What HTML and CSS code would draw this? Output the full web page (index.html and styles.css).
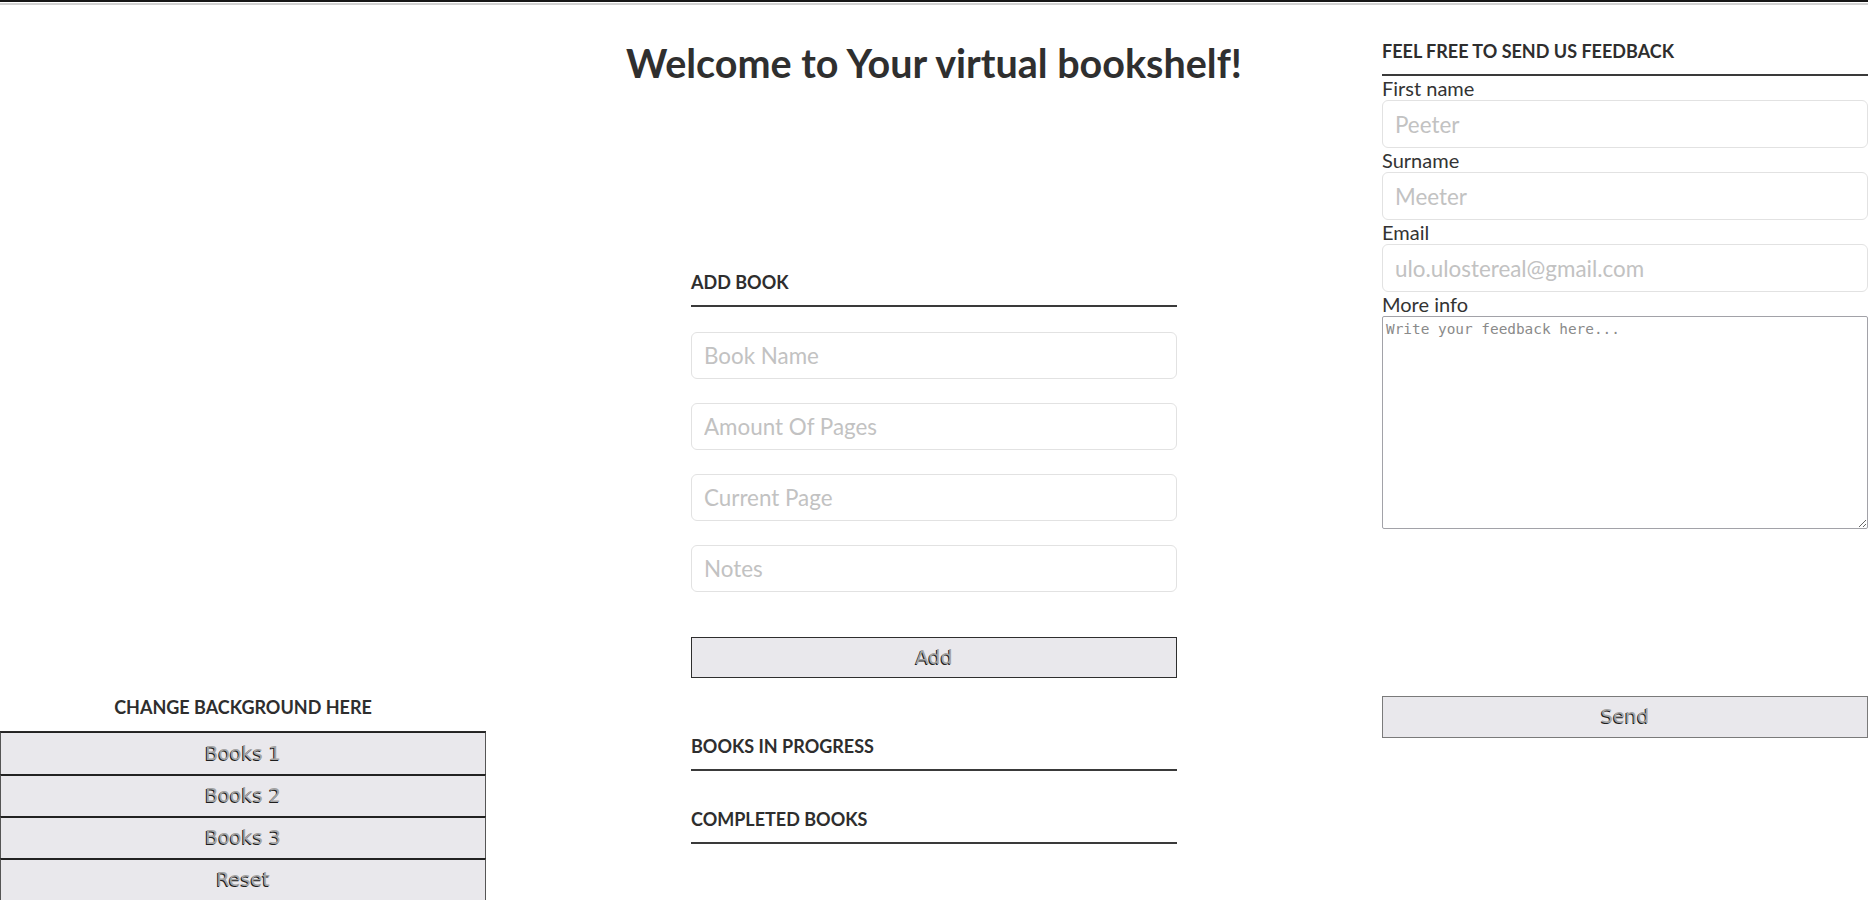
FILE: index.html
```html
<!DOCTYPE html>
<html lang="en">
<head>
<meta charset="utf-8">
<title>Virtual bookshelf</title>
<link rel="stylesheet" href="styles.css">
</head>
<body>
<div class="topline"></div>
<main class="layout">
  <section class="col col-left">
    <h3 class="head head-plain">Change background here</h3>
    <div class="bg-buttons">
      <button class="bg-btn">Books 1</button>
      <button class="bg-btn">Books 2</button>
      <button class="bg-btn">Books 3</button>
      <button class="bg-btn">Reset</button>
    </div>
  </section>

  <section class="col col-center">
    <h1 class="welcome">Welcome to Your virtual bookshelf!</h1>
    <h3 class="head head-add">Add book</h3>
    <form class="add-form">
      <input class="field" type="text" placeholder="Book Name">
      <input class="field" type="text" placeholder="Amount Of Pages">
      <input class="field" type="text" placeholder="Current Page">
      <input class="field" type="text" placeholder="Notes">
      <button type="button" class="btn btn-add">Add</button>
    </form>
    <h3 class="head head-progress">Books in progress</h3>
    <h3 class="head head-completed">Completed books</h3>
  </section>

  <section class="col col-right">
    <h3 class="head">Feel free to send us feedback</h3>
    <form class="feedback">
      <label class="lbl">First name</label>
      <input class="field field-fb" type="text" placeholder="Peeter">
      <label class="lbl">Surname</label>
      <input class="field field-fb" type="text" placeholder="Meeter">
      <label class="lbl">Email</label>
      <input class="field field-fb" type="email" placeholder="ulo.ulostereal@gmail.com">
      <label class="lbl">More info</label>
      <textarea class="info" placeholder="Write your feedback here..."></textarea>
      <button type="button" class="btn btn-send">Send</button>
    </form>
  </section>
</main>
</body>
</html>
```

FILE: styles.css
```css
html, body {
  margin: 0;
  padding: 0;
  background: #ffffff;
  overflow: hidden;
}

body {
  font-family: Lato, "Open Sans", "Liberation Sans", sans-serif;
  color: #333333;
}

.topline {
  height: 2px;
  background: #161616;
  border-bottom: 1px solid #ffffff;
  box-shadow: 0 2px 0 #d2d2d2;
  margin-bottom: 1px;
}

.layout {
  display: grid;
  grid-template-columns: 486px 486px 486px;
  justify-content: space-between;
  align-items: start;
}

.col {
  display: flex;
  flex-direction: column;
}

/* headings */
.head {
  margin: 0;
  font-size: 18px;
  font-weight: 700;
  line-height: 22.5px;
  text-transform: uppercase;
  color: #2e2e2e;
  padding-bottom: 11.5px;
  border-bottom: 2px solid #3a3a3a;
}

.col-right .head {
  margin-top: 36px;
}

.head-plain {
  border-bottom: 0;
  padding-bottom: 0;
  text-align: center;
  margin-top: 692.4px;
  margin-bottom: 12px;
}

.welcome {
  margin: 35px -120px 0;
  font-size: 39.5px;
  font-weight: 700;
  line-height: 48px;
  text-align: center;
  white-space: nowrap;
  color: #2f2f2f;
}

.head-add {
  margin-top: 184px;
}

.head-progress {
  margin-top: 56.8px;
}

.head-completed {
  margin-top: 37.6px;
}

/* forms */
.add-form {
  display: flex;
  flex-direction: column;
  gap: 24px;
  margin-top: 25px;
}

.field {
  box-sizing: border-box;
  width: 100%;
  height: 47px;
  margin: 0;
  padding: 0 12px;
  border: 1px solid #e2e2e2;
  border-radius: 6px;
  font-family: Lato, "Open Sans", sans-serif;
  font-size: 22.4px;
  color: #333;
  background: #fff;
  outline: none;
}

.field::placeholder {
  color: #c2c2c2;
}

.field-fb {
  height: 48px;
}

.feedback {
  display: flex;
  flex-direction: column;
}

.lbl {
  font-size: 20px;
  line-height: 24px;
  color: #333;
}

.info {
  box-sizing: border-box;
  width: 100%;
  height: 212.5px;
  margin: 0;
  padding: 4px 3px 2px;
  border: 1px solid #a2a2a8;
  border-radius: 2px;
  font-family: "DejaVu Sans Mono", "Liberation Mono", monospace;
  font-size: 14.4px;
  resize: vertical;
}

.info::placeholder {
  color: #8a8a8a;
}

/* buttons */
.btn,
.bg-btn {
  box-sizing: border-box;
  width: 100%;
  margin: 0;
  background: #e9e8ec;
  font-family: "DejaVu Sans", Verdana, sans-serif;
  font-size: 19.2px;
  font-weight: 400;
  color: #a4a4a4;
  text-shadow: -1px 0.5px 0.5px #1e1e1e;
  cursor: pointer;
  padding: 0;
}

.btn-add {
  height: 41px;
  margin-top: 21px;
  border: 1px solid #2e2e2e;
}

.btn-send {
  height: 42px;
  margin-top: 167px;
  border: 1px solid #7a7a7a;
}

.bg-buttons {
  display: flex;
  flex-direction: column;
  border-top: 1px solid #2a2a2a;
}

.bg-btn {
  height: 43px;
  border: 1px solid #222222;
  border-left: 1px solid #555;
  border-right: 1px solid #555;
  display: block;
}

.bg-btn + .bg-btn {
  margin-top: -1px;
  border-top-width: 2px;
}
```
